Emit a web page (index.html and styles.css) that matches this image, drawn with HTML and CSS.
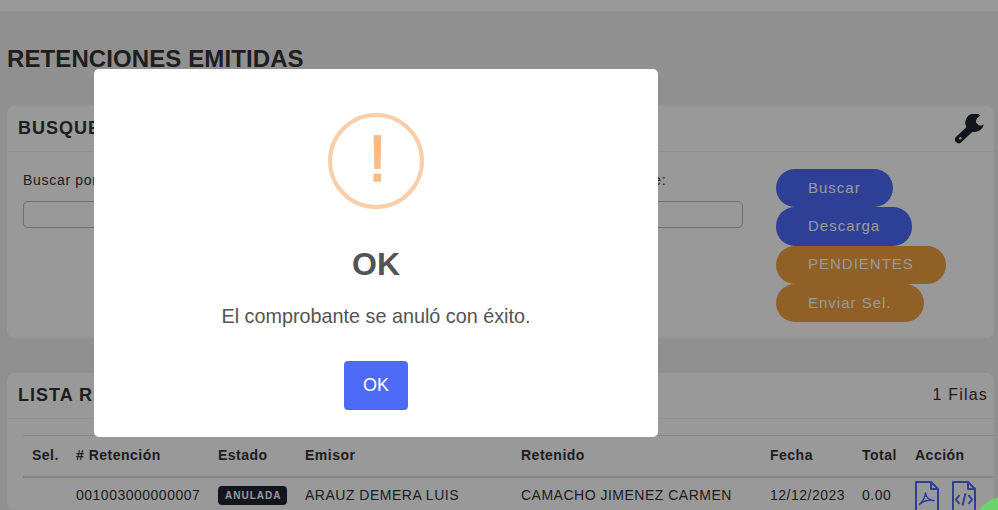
FILE: index.html
```html
<!DOCTYPE html>
<html lang="es">
<head>
<meta charset="utf-8">
<title>Retenciones emitidas</title>
<link rel="stylesheet" href="styles.css">
</head>
<body>
<div class="topbar"></div>
<main class="content">
  <h1 class="page-title">RETENCIONES EMITIDAS</h1>
  <section class="card search-card">
    <header class="card-head">
      <h2>BUSQUEDA</h2>
      <svg class="wrench" viewBox="0 0 30 30" aria-hidden="true">
        <path d="M25.500 1.500A9.300 9.300 0 1 0 28.800 10C28.500 10.500 26 12 24 11.500L21 8.500C20.500 6 22.500 3 25.500 1.500z"/>
        <path class="wrench-handle" d="M16 14L3.700 25.500"/>
        <circle class="wrench-hole" cx="5.300" cy="24.300" r="1.200"/>
      </svg>
    </header>
    <div class="search-body">
      <div class="fields">
        <label class="field"><span>Buscar por:</span><input type="text"></label>
        <label class="field"><span>Ruc emisor:</span><input type="text"></label>
        <label class="field"><span>Ruc/Cédula de cliente:</span><input type="text"></label>
      </div>
      <div class="actions">
        <button class="pill pill-blue">Buscar</button>
        <button class="pill pill-blue">Descarga</button>
        <button class="pill pill-orange">PENDIENTES</button>
        <button class="pill pill-orange">Enviar Sel.</button>
      </div>
    </div>
  </section>
  <section class="card list-card">
    <header class="card-head list-head">
      <h2>LISTA RETENCIONES</h2>
      <span class="rows-count">1 Filas</span>
    </header>
    <div class="table-wrap">
      <table class="data-table">
        <colgroup>
          <col class="c-sel"><col class="c-num"><col class="c-state"><col class="c-issuer"><col class="c-held"><col class="c-date"><col class="c-total"><col class="c-action">
        </colgroup>
        <thead>
          <tr><th>Sel.</th><th># Retención</th><th>Estado</th><th>Emisor</th><th>Retenido</th><th>Fecha</th><th>Total</th><th>Acción</th></tr>
        </thead>
        <tbody>
          <tr>
            <td></td>
            <td>001003000000007</td>
            <td><span class="tag">ANULADA</span></td>
            <td>ARAUZ DEMERA LUIS</td>
            <td>CAMACHO JIMENEZ CARMEN</td>
            <td>12/12/2023</td>
            <td>0.00</td>
            <td class="icons">
              <svg class="doc" viewBox="0 0 24 32" aria-hidden="true"><path d="M1 1h15l7 7v23H1z"/><path d="M16 1v7h7"/><path class="doc-mark" d="M10.500 12C11 16 14 19 19 19.500C14 19 8 20 4.500 23.500C7 21 10 17 10.500 12z"/></svg>
              <svg class="doc" viewBox="0 0 24 32" aria-hidden="true"><path d="M1 1h15l7 7v23H1z"/><path d="M16 1v7h7"/><path d="M7.500 14l-3.500 4.500 3.500 4.500M16.500 14l3.500 4.500-3.500 4.500M13.500 12.500l-3 12"/></svg>
            </td>
          </tr>
        </tbody>
      </table>
    </div>
  </section>
</main>
<div class="backdrop">
  <div class="dialog" role="dialog">
    <div class="warn-ring"><span>!</span></div>
    <h2 class="dialog-title">OK</h2>
    <p class="dialog-text">El comprobante se anuló con éxito.</p>
    <button class="dialog-btn">OK</button>
  </div>
</div>
<div class="chat-bubble"></div>
</body>
</html>
```
FILE: styles.css
```css
* { box-sizing: border-box; }
html { height: 510px; overflow: hidden; }
body {
  margin: 0;
  height: 510px;
  overflow: hidden;
  position: relative;
  background: #f1f1f1;
  color: #333;
  font-family: "Liberation Sans", Arial, sans-serif;
}
.topbar { height: 11px; background: #fff; }
.content { padding: 0 4px 0 7px; }
.page-title {
  margin: 0;
  padding-top: 34px;
  height: 95px;
  font-size: 24px;
  line-height: 28px;
  font-weight: 700;
  letter-spacing: .1px;
}
.card { background: #fff; border-radius: 8px; }
.search-card { height: 232px; }
.list-card { margin-top: 35px; height: 137px; overflow: hidden; }
.card-head {
  height: 46px;
  padding: 0 11px;
  display: flex;
  align-items: center;
  justify-content: space-between;
  border-bottom: 1px solid #f2f2f2;
}
.card-head h2 {
  margin: 0;
  font-size: 18px;
  font-weight: 700;
  letter-spacing: 1px;
}
.wrench { width: 30px; height: 30px; fill: #1e2433; margin-right: -2px; margin-top: 1px; }
.wrench-handle { fill: none; stroke: #1e2433; stroke-width: 7.5; stroke-linecap: round; }
.wrench-hole { fill: #fff; }
.search-body { display: flex; padding: 17px 0 0 16px; }
.fields { width: 720px; display: grid; grid-template-columns: 1fr 1fr 233px; gap: 16px; }
.field { display: flex; flex-direction: column; font-size: 14px; letter-spacing: .7px; white-space: nowrap; }
.field span { height: 32px; padding-top: 3px; }
.field input {
  height: 27px;
  width: 100%;
  border: 1px solid #bbb;
  border-radius: 5px;
  background: #fff;
}
.actions { margin-left: 33px; display: flex; flex-direction: column; align-items: flex-start; }
.pill {
  height: 38.33px;
  padding: 0 32px 2px;
  border: 0;
  border-radius: 19px;
  color: #fff;
  font-family: inherit;
  font-size: 15px;
  letter-spacing: 1px;
}
.pill-blue { background: #4e69fa; }
.pill-orange { background: #f0a040; }
.list-head .rows-count { font-size: 16px; letter-spacing: 1.2px; margin-right: -5px; margin-top: -2px; }
.table-wrap { padding: 16px 0 0 16px; }
.data-table {
  width: 971px;
  table-layout: fixed;
  border-collapse: collapse;
  font-size: 14px;
  letter-spacing: .5px;
}
.c-sel { width: 44px; }
.c-num { width: 142px; }
.c-state { width: 87px; }
.c-issuer { width: 216px; }
.c-held { width: 249px; }
.c-date { width: 92px; }
.c-total { width: 53px; }
.c-action { width: 88px; }
.data-table th {
  height: 41px;
  padding: 0 0 1px 9px;
  text-align: left;
  font-weight: 700;
  border-top: 1px solid #dee2e6;
  border-bottom: 2px solid #dee2e6;
}
.data-table td { height: 36px; padding: 0 0 0 9px; white-space: nowrap; vertical-align: middle; }
.tag {
  display: inline-block;
  height: 19px;
  line-height: 19px;
  padding: 0 6px 0 7px;
  border-radius: 4px;
  background: #1e2433;
  color: #fff;
  font-size: 10px;
  font-weight: 700;
  letter-spacing: 1px;
}
.doc {
  width: 24px;
  height: 32px;
  fill: none;
  stroke: #4e69fa;
  stroke-width: 2;
  stroke-linejoin: round;
  margin-right: 9px;
  vertical-align: top;
  margin-top: 3px;
}
.doc-mark { stroke-width: 1.5; }
.backdrop {
  position: absolute;
  inset: 0;
  background: rgba(0, 0, 0, .4);
  padding: 69px 0 0 94px;
}
.dialog {
  width: 564px;
  height: 368px;
  background: #fff;
  border-radius: 5px;
  display: flex;
  flex-direction: column;
  align-items: center;
  padding-top: 44px;
  color: #545454;
}
.warn-ring {
  width: 96px;
  height: 96px;
  border: 4px solid #facea8;
  border-radius: 50%;
  display: flex;
  align-items: center;
  justify-content: center;
  padding: 0 0 4px 3px;
  color: #f8bb86;
  font-size: 64px;
  line-height: 1;
  -webkit-text-stroke: 1.5px #f8bb86;
}
.dialog-title { margin: 34px 0 0; font-size: 32px; line-height: 42px; font-weight: 700; }
.dialog-text { margin: 19px 0 0; font-size: 19.8px; line-height: 24px; }
.dialog-btn {
  margin-top: 33px;
  width: 64px;
  height: 49px;
  border: 0;
  border-radius: 4px;
  background: #4e6bf7;
  color: #fff;
  font-family: inherit;
  font-size: 18px;
}
.chat-bubble {
  position: absolute;
  left: 974px;
  top: 497px;
  width: 60px;
  height: 60px;
  border-radius: 50%;
  background: #6bd46b;
}
```
